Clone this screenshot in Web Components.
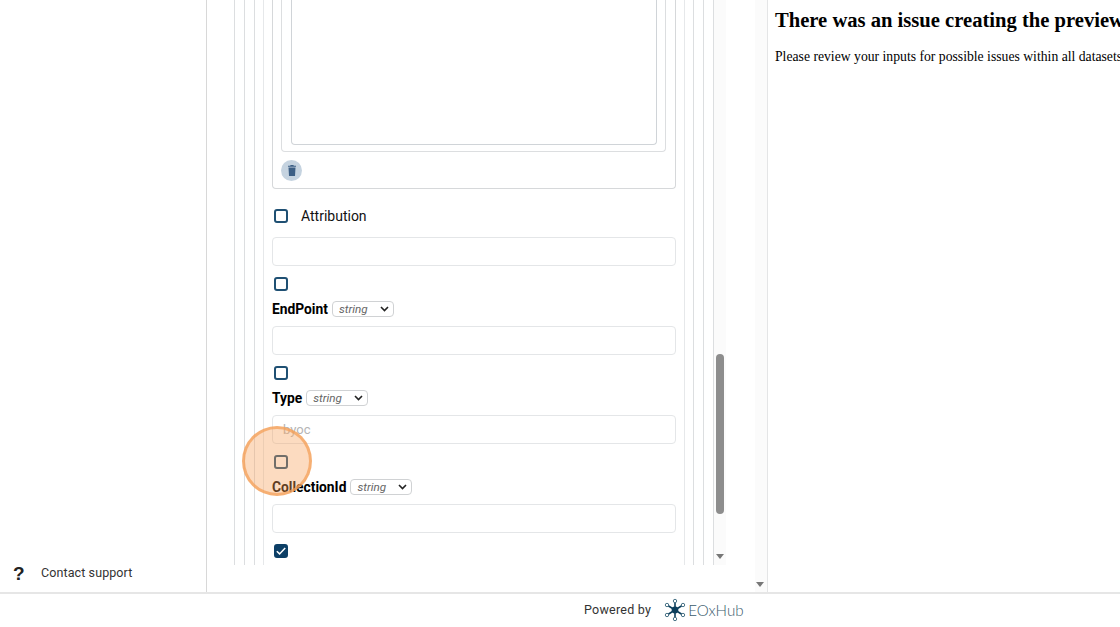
<!DOCTYPE html>
<html>
<head>
<meta charset="utf-8">
<title>Preview</title>
<style>
	html, body { margin: 0; height: 100%; overflow: hidden; background: #fff; }
</style>
</head>
<body>
<app-shell></app-shell>
<script>
const FIELD_FONT = 'Roboto, "Liberation Sans", sans-serif'

/** One checkbox, checked or not. */
class FormCheck extends HTMLElement {
	constructor() {
		super()
		const on = this.hasAttribute('checked')
		this.attachShadow({ mode: 'open' }).innerHTML = `
			<style>
				:host { display: flex; width: 14px; height: 13px; }
				div {
					box-sizing: border-box; flex: none; width: 14px; height: 14px; margin-top: -1px;
					border: 2px solid #1f5073; border-radius: 3px;
					background: ${on ? '#0d3f66' : '#fff'};
					${on ? 'border-color: #0d3f66;' : ''}
				}
				svg { display: block; width: 10px; height: 10px; }
			</style>
			<div>${on ? '<svg viewBox="0 0 10 10"><path d="M.8 5.2l2.8 2.7 5.6-6" fill="none" stroke="#fff" stroke-width="1.5"/></svg>' : ''}</div>
		`
	}
}
customElements.define('form-check', FormCheck)

/** Text input look-alike, with an optional placeholder. */
class FormInput extends HTMLElement {
	constructor() {
		super()
		this.attachShadow({ mode: 'open' }).innerHTML = `
			<style>
				:host {
					display: block; height: 27px; border: 1px solid #e4e6e8; border-radius: 4px;
					font: 13px/28px ${FIELD_FONT}; color: #b5b5b5; padding-left: 10px;
				}
			</style>
			<slot></slot>
		`
	}
}
customElements.define('form-input', FormInput)

/** Bold property label followed by the type select. */
class FormLabel extends HTMLElement {
	constructor() {
		super()
		const w = this.getAttribute('select-width')
		this.attachShadow({ mode: 'open' }).innerHTML = `
			<style>
				:host {
					display: flex; align-items: center; gap: 4px; height: 20px;
					font: 700 13.8px/20px ${FIELD_FONT}; color: #000;
				}
				.select {
					display: flex; align-items: center; justify-content: space-between;
					box-sizing: border-box; width: ${w}px; height: 16px; padding: 0 4px 0 6px;
					border: 1px solid #d0d2d4; border-radius: 4px;
					font: italic 400 11.7px ${FIELD_FONT}; color: #666;
				}
				svg { width: 9px; height: 6px; }
			</style>
			<slot></slot>
			<div class="select">string<svg viewBox="0 0 9 6"><path d="M1 1l3.5 3.5L8 1" fill="none" stroke="#222" stroke-width="1.6"/></svg></div>
		`
	}
}
customElements.define('form-label', FormLabel)

/** Bordered boxes at the top of the form, scrolled past their upper edge. */
class FormObject extends HTMLElement {
	constructor() {
		super()
		this.attachShadow({ mode: 'open' }).innerHTML = `
			<style>
				:host { display: block; height: 189px; box-sizing: border-box;
					border: 1px solid #d6d8da; border-top: 0; border-radius: 0 0 4px 4px; padding: 0 9px 0 8px; }
				.outer { height: 152px; box-sizing: border-box; border: 1px solid #dcdee0; border-top: 0; border-radius: 0 0 4px 4px; padding: 0 8px 6px 9px; }
				.inner { height: 100%; box-sizing: border-box; border: 1px solid #d0d4d8; border-top: 0; border-radius: 0 0 4px 4px; }
				.del { width: 21px; height: 21px; margin-top: 8px; border-radius: 50%; background: #c5d3e0;
					display: flex; align-items: center; justify-content: center; }
				svg { width: 8px; height: 11px; display: block; }
			</style>
			<div class="outer"><div class="inner"></div></div>
			<div class="del"><svg viewBox="0 0 8 11"><path d="M2.6 0h2.8l.4.7H8v1.1H0V.7h2.2zM.5 2.6h7L7 11H1z" fill="#3c5f85"/></svg></div>
		`
	}
}
customElements.define('form-object', FormObject)

/** The scrolled form column with its nested indent lines. */
class FormPanel extends HTMLElement {
	constructor() {
		super()
		this.attachShadow({ mode: 'open' }).innerHTML = `
			<style>
				:host { display: block; position: relative; width: 561px; height: 592px; box-sizing: border-box; border-right: 1px solid #e4e5e6; }
				.nest { box-sizing: border-box; height: 565px; border: solid #dcdee0; border-width: 0 1px; }
				.l1 { margin-left: 27px; width: 480px; padding: 0 9px; }
				.l2 { width: 460px; padding: 0 9px; height: 100%; }
				.l3 { width: 440px; padding: 0 8px; height: 100%; }
				.l4 { width: 422px; padding: 0 8px; height: 100%; overflow: hidden; border-color: #e6e8ea; }
				.attr { display: flex; align-items: center; gap: 13px; height: 20px; margin: 17px 0 11px; padding-left: 2px;
					font: 14px/20px ${FIELD_FONT}; color: #111; }
				form-check.solo { margin: 12px 0 8px 2px; }
				.track { position: absolute; left: 507px; top: 0; width: 12px; height: 565px; background: #fbfbfb; }
				.outer-track { position: absolute; left: 548px; top: 0; width: 12px; height: 592px; background: #fbfbfb; }
				.thumb { position: absolute; left: 509px; top: 354px; width: 8px; height: 160px; border-radius: 4px; background: #8d8d8d; }
				.arrow { position: absolute; width: 0; height: 0; border: 4px solid transparent; border-top: 5px solid #777; border-bottom: 0; }
				.a1 { left: 509px; top: 554px; }
				.a2 { left: 549px; top: 582px; }
			</style>
			<div class="nest l1"><div class="nest l2"><div class="nest l3"><div class="nest l4">
				<form-object></form-object>
				<div class="attr"><form-check></form-check>Attribution</div>
				<form-input></form-input>
				<form-check class="solo"></form-check>
				<form-label select-width="62">EndPoint</form-label>
				<form-input style="margin-top:7px"></form-input>
				<form-check class="solo"></form-check>
				<form-label select-width="62">Type</form-label>
				<form-input style="margin-top:7px">byoc</form-input>
				<form-check class="solo"></form-check>
				<form-label select-width="62">CollectionId</form-label>
				<form-input style="margin-top:7px"></form-input>
				<form-check class="solo" checked></form-check>
			</div></div></div></div>
			<div class="track"></div>
			<div class="outer-track"></div>
			<div class="thumb"></div>
			<div class="arrow a1"></div>
			<div class="arrow a2"></div>
		`
	}
}
customElements.define('form-panel', FormPanel)

/** Left rail, only the support link is in view. */
class SideRail extends HTMLElement {
	constructor() {
		super()
		this.attachShadow({ mode: 'open' }).innerHTML = `
			<style>
				:host { display: flex; align-items: flex-end; width: 207px; height: 592px; box-sizing: border-box;
					border-right: 1px solid #d8d8d8; }
				a { display: flex; align-items: center; height: 20px; margin-bottom: 9px; padding-left: 13px;
					font: 12.5px/20px Roboto, "Liberation Sans", sans-serif; letter-spacing: .1px; color: #333; }
				b { width: 28px; font: 700 19px/20px "Liberation Sans", sans-serif; color: #222; position: relative; top: 1px; }
			</style>
			<a><b>?</b>Contact support</a>
		`
	}
}
customElements.define('side-rail', SideRail)

/** Preview pane showing the error, in unstyled serif. */
class PreviewPane extends HTMLElement {
	constructor() {
		super()
		this.attachShadow({ mode: 'open' }).innerHTML = `
			<style>
				:host { display: block; flex: 1; min-width: 0; overflow: hidden; padding: 8px 0 0 7px;
					font-family: "Liberation Serif", serif; color: #000; white-space: nowrap; }
				h2 { margin: 0 0 14px; font-size: 20.6px; line-height: 25px; font-weight: 700; }
				p { margin: 0; font-size: 13.7px; line-height: 20px; }
			</style>
			<h2>There was an issue creating the preview</h2>
			<p>Please review your inputs for possible issues within all datasets</p>
		`
	}
}
customElements.define('preview-pane', PreviewPane)

/** Bottom strip with the EOxHub logo. */
class HubFooter extends HTMLElement {
	constructor() {
		super()
		const rings = [[675, 601], [675, 619], [667, 605], [683, 605], [667, 615], [683, 615]]
		this.attachShadow({ mode: 'open' }).innerHTML = `
			<style>
				:host { display: flex; align-items: center; height: 34px; box-sizing: border-box; border-top: 2px solid #e6e6e6;
					padding: 0 0 1px 584px; font: 12.5px Roboto, "Liberation Sans", sans-serif; letter-spacing: .25px; color: #333; }
				svg { width: 22px; height: 24px; margin-left: 13px; display: block; }
				span.hub { margin-left: 2px; font: 300 15.2px Lato, "Liberation Sans", sans-serif; letter-spacing: 0; color: #3a5a6c; }
			</style>
			Powered by
			<svg viewBox="664 598 22 24">
				${rings.map(r => `<line x1="675" y1="610" x2="${r[0]}" y2="${r[1]}" stroke="#0d3f5c" stroke-width="1.6"/>`).join('')}
				<circle cx="675" cy="610" r="3.4" fill="#0d3f5c"/>
				${rings.map(r => `<circle cx="${r[0]}" cy="${r[1]}" r="1.7" fill="#fff" stroke="#4a7488"/>`).join('')}
			</svg>
			<span class="hub">EOxHub</span>
		`
	}
}
customElements.define('hub-footer', HubFooter)

/** Page frame, plus the orange click marker from the recording. */
class AppShell extends HTMLElement {
	constructor() {
		super()
		this.attachShadow({ mode: 'open' }).innerHTML = `
			<style>
				:host { display: block; position: relative; width: 1120px; height: 627px; overflow: hidden; }
				.main { display: flex; height: 592px; }
				.marker { position: absolute; left: 241.7px; top: 425.7px; width: 70.8px; height: 70.8px; box-sizing: border-box;
					border-radius: 50%; background: rgba(246, 160, 90, .38); border: 3px solid rgba(244, 160, 90, .75); }
			</style>
			<div class="main">
				<side-rail></side-rail>
				<form-panel></form-panel>
				<preview-pane></preview-pane>
			</div>
			<hub-footer></hub-footer>
			<div class="marker"></div>
		`
	}
}
customElements.define('app-shell', AppShell)
</script>
</body>
</html>
